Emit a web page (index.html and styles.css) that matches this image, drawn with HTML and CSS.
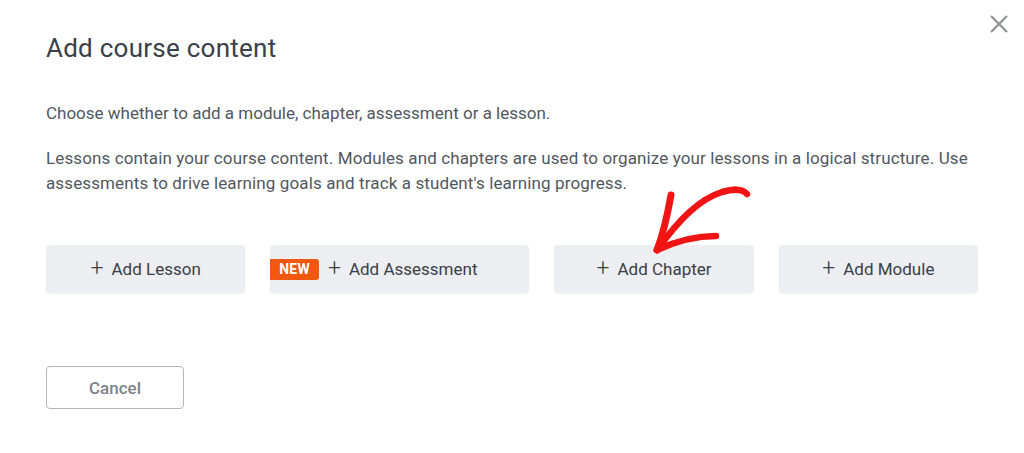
FILE: index.html
```html
<!DOCTYPE html>
<html lang="en">
<head>
<meta charset="utf-8">
<title>Add course content</title>
<link rel="stylesheet" href="styles.css">
</head>
<body>
<div class="modal">
  <button class="close" aria-label="Close">
    <svg width="18" height="18" viewBox="0 0 18 18"><path d="M1 1L17 17M17 1L1 17" stroke="#8a8d91" stroke-width="2" fill="none"/></svg>
  </button>
  <h1 class="title">Add course content</h1>
  <p class="text lead">Choose whether to add a module, chapter, assessment or a lesson.</p>
  <p class="text detail">Lessons contain your course content. Modules and chapters are used to organize your lessons in a logical structure. Use assessments to drive learning goals and track a student's learning progress.</p>
  <div class="options">
    <button class="opt opt-lesson"><span class="plus">+</span>Add Lesson</button>
    <button class="opt opt-assess"><span class="badge">NEW</span><span class="plus">+</span>Add Assessment</button>
    <button class="opt opt-chapter"><span class="plus">+</span>Add Chapter</button>
    <button class="opt opt-module"><span class="plus">+</span>Add Module</button>
  </div>
  <div class="footer">
    <button class="cancel">Cancel</button>
  </div>
</div>
<svg class="arrow" width="1024" height="453" viewBox="0 0 1024 453">
  <g fill="none" stroke="#f01414" stroke-linecap="round" stroke-linejoin="round">
    <path d="M747 194 C742 188 733 189 722 192 C700 199 680 218 657 250" stroke-width="6.5"/>
    <path d="M671 195 C668 212 664 232 657 250" stroke-width="7"/>
    <path d="M657 250 C672 243 694 236 716 236" stroke-width="6.5"/>
  </g>
</svg>
</body>
</html>
```
FILE: styles.css
```css
* { box-sizing: border-box; }
html, body { margin: 0; padding: 0; background: #ffffff; }
body {
  font-family: Roboto, "Liberation Sans", Arial, sans-serif;
  color: #4b5159;
  width: 1024px;
  height: 453px;
  overflow: hidden;
  position: relative;
}
.modal {
  position: relative;
  padding: 32px 46px 0 46px;
}
.close {
  position: absolute;
  top: 15px;
  right: 16px;
  width: 18px;
  height: 18px;
  padding: 0;
  border: 0;
  background: none;
  display: flex;
}
.title {
  margin: 0;
  font-size: 26px;
  line-height: 32px;
  font-weight: 400;
  letter-spacing: 0.25px;
  color: #3a4047;
}
.text {
  margin: 0;
  font-size: 17px;
  line-height: 25px;
  color: #51575e;
}
.lead { margin-top: 37px; margin-bottom: 20px; }
.detail { letter-spacing: 0.12px; }
.options {
  display: flex;
  gap: 25px;
  margin-top: 49px;
}
.opt {
  height: 48px;
  width: 200px;
  border: 0;
  border-radius: 4px;
  background: #eceef1;
  box-shadow: 0 1px 2px rgba(0,0,0,0.06);
  font-family: inherit;
  font-size: 17px;
  color: #3a4047;
  display: flex;
  align-items: center;
  justify-content: center;
  padding: 0;
}
.opt-assess { width: 260px; justify-content: flex-start; }
.plus {
  font-size: 23px;
  font-weight: 300;
  margin-right: 8px;
  line-height: 1;
  position: relative;
  top: -1px;
}
.badge {
  background: #f2570f;
  color: #ffffff;
  font-weight: 700;
  font-size: 14px;
  line-height: 21px;
  height: 21px;
  padding: 0 9px 0 9px;
  border-radius: 0 3px 3px 0;
  margin-right: 9px;
  letter-spacing: 0.2px;
}
.footer { margin-top: 73px; }
.cancel {
  width: 138px;
  height: 43px;
  border: 1px solid #b3b7bc;
  border-radius: 4px;
  background: #ffffff;
  font-family: inherit;
  font-size: 17px;
  font-weight: 500;
  color: #7d838a;
}
.arrow {
  position: absolute;
  left: 0;
  top: 0;
  pointer-events: none;
}
```
